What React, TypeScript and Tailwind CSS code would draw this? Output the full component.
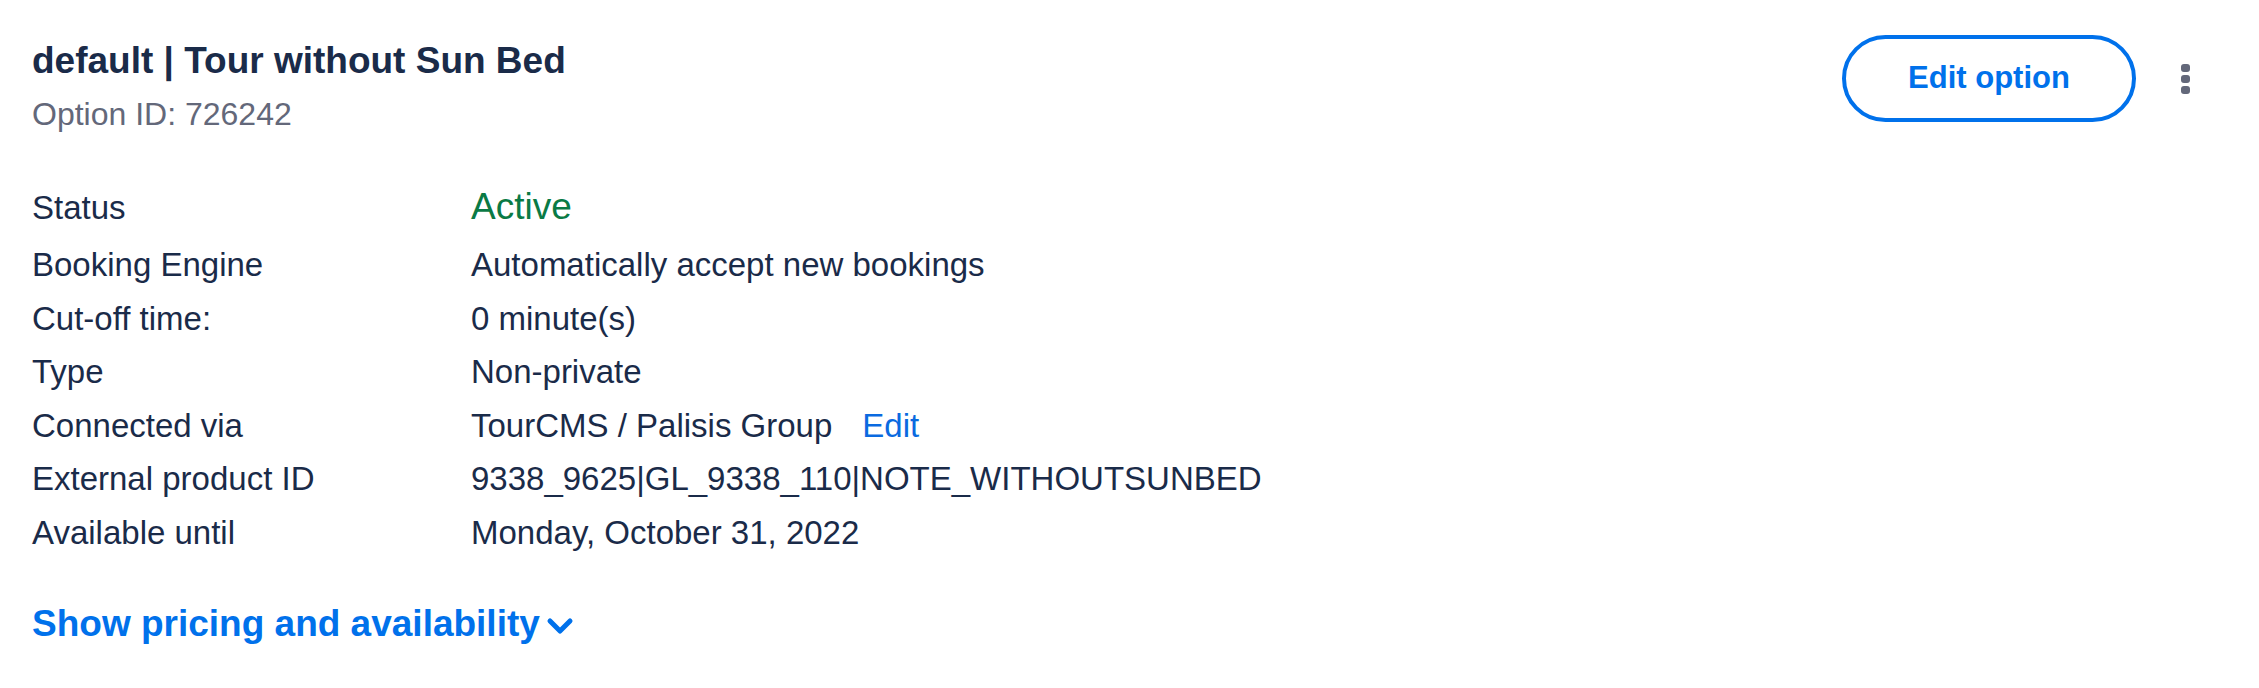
import { ChevronDown } from 'lucide-react'

const rows: { label: string; value: React.ReactNode }[] = [
  { label: 'Booking Engine', value: 'Automatically accept new bookings' },
  { label: 'Cut-off time:', value: '0 minute(s)' },
  { label: 'Type', value: 'Non-private' },
  {
    label: 'Connected via',
    value: (
      <>
        TourCMS / Palisis Group
        <a className="ml-[30px] text-[#0a6ae0] cursor-pointer">Edit</a>
      </>
    ),
  },
  { label: 'External product ID', value: '9338_9625|GL_9338_110|NOTE_WITHOUTSUNBED' },
  { label: 'Available until', value: 'Monday, October 31, 2022' },
]

export default function App() {
  return (
    <div
      className="w-[2259px] h-[688px] bg-white text-[#1a2b49] pl-[32px] pr-[69px] pt-[38px]"
      style={{ fontFamily: '"Liberation Sans", Arial, sans-serif' }}
    >
      <div className="flex items-start justify-between">
        <div>
          <h2 className="text-[37px] leading-[46px] font-bold">default | Tour without Sun Bed</h2>
          <p className="text-[32px] leading-[40px] text-[#63687a] mt-[10px]">Option ID: 726242</p>
        </div>
        <div className="flex items-center gap-[45px] mt-[-3px]">
          <button className="w-[294px] h-[87px] rounded-full border-[4px] border-[#0071eb] text-[#0071eb] text-[31px] font-bold">
            Edit option
          </button>
          <div className="flex flex-col gap-[3px]">
            <span className="w-[9px] h-[8px] rounded-[3px] bg-[#63687a]" />
            <span className="w-[9px] h-[8px] rounded-[3px] bg-[#63687a]" />
            <span className="w-[9px] h-[8px] rounded-[3px] bg-[#63687a]" />
          </div>
        </div>
      </div>

      <div className="mt-[42px] text-[33px]">
        <div className="flex items-baseline leading-[61px]">
          <div className="w-[439px] shrink-0">Status</div>
          <div className="text-[37px] text-[#0a7a45]">Active</div>
        </div>
        {rows.map((r) => (
          <div key={r.label} className="flex items-baseline leading-[53.6px]">
            <div className="w-[439px] shrink-0">{r.label}</div>
            <div>{r.value}</div>
          </div>
        ))}
      </div>

      <button className="mt-[41px] flex items-center text-[37px] leading-[46px] font-bold text-[#0071eb]">
        Show pricing and availability
        <ChevronDown className="w-[40px] h-[40px] mt-[4px]" strokeWidth={3} />
      </button>
    </div>
  )
}
